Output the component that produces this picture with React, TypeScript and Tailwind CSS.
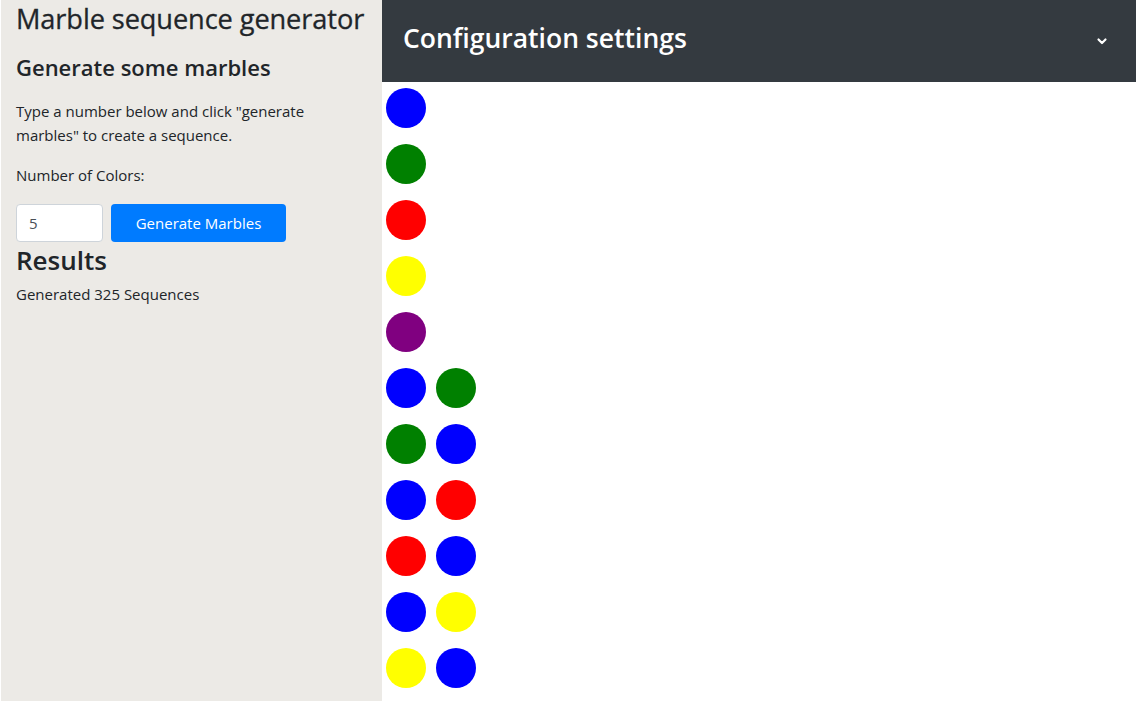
import { useState } from 'react'

const COLORS: Record<string, string> = {
  blue: '#0000ff',
  green: '#008000',
  red: '#ff0000',
  yellow: '#ffff00',
  purple: '#800080',
}

const sequences: string[][] = [
  ['blue'],
  ['green'],
  ['red'],
  ['yellow'],
  ['purple'],
  ['blue', 'green'],
  ['green', 'blue'],
  ['blue', 'red'],
  ['red', 'blue'],
  ['blue', 'yellow'],
  ['yellow', 'blue'],
  ['blue', 'purple'],
  ['purple', 'blue'],
]

export default function App() {
  const [count, setCount] = useState('5')

  return (
    <div className="flex min-h-screen bg-white text-[#212529]" style={{ fontFamily: '"Open Sans", "Noto Sans", sans-serif' }}>
      {/* Sidebar */}
      <div className="ml-px w-[381px] shrink-0 bg-[#eceae6] px-[15px]">
        <h1 className="whitespace-nowrap pt-[1px] text-[27.2px] font-medium leading-[36px] tracking-[-0.1px] [-webkit-text-stroke:0.3px_#212529]">Marble sequence generator</h1>
        <h2 className="mt-[15px] text-[22px] font-semibold leading-[30px]">Generate some marbles</h2>
        <p className="mt-[17px] text-[15px] leading-6">
          Type a number below and click "generate marbles" to create a sequence.
        </p>
        <p className="mt-4 text-[15px] leading-6">Number of Colors:</p>
        <div className="mt-[17px] flex gap-2">
          <input
            value={count}
            onChange={e => setCount(e.target.value)}
            className="h-[38px] w-[87px] rounded border border-[#ced4da] bg-white px-3 text-[15px] text-[#495057] outline-none"
          />
          <button className="h-[38px] w-[175px] rounded bg-[#007bff] text-[15px] text-white">
            Generate Marbles
          </button>
        </div>
        <h2 className="text-[26px] font-semibold leading-[36px]">Results</h2>
        <p className="mt-1 text-[15px] leading-6">Generated 325 Sequences</p>
      </div>

      {/* Main */}
      <div className="flex-1">
        <div className="flex h-[82px] items-center justify-between bg-[#343a40] pb-[5px] pl-[21px] pr-[28px] text-white">
          <h2 className="text-[26.5px] font-semibold">Configuration settings</h2>
          <svg width="12" height="12" viewBox="0 0 12 12" fill="none" className="mt-[5px]">
            <path d="M2.5 4.5 L6 8 L9.5 4.5" stroke="white" strokeWidth="2.2" strokeLinecap="round" strokeLinejoin="round" />
          </svg>
        </div>
        <div className="flex flex-col gap-4 pl-1 pt-[6px]">
          {sequences.map((seq, i) => (
            <div key={i} className="flex gap-[10px]">
              {seq.map((c, j) => (
                <div key={j} className="h-10 w-10 rounded-full" style={{ backgroundColor: COLORS[c] }} />
              ))}
            </div>
          ))}
        </div>
      </div>
    </div>
  )
}
